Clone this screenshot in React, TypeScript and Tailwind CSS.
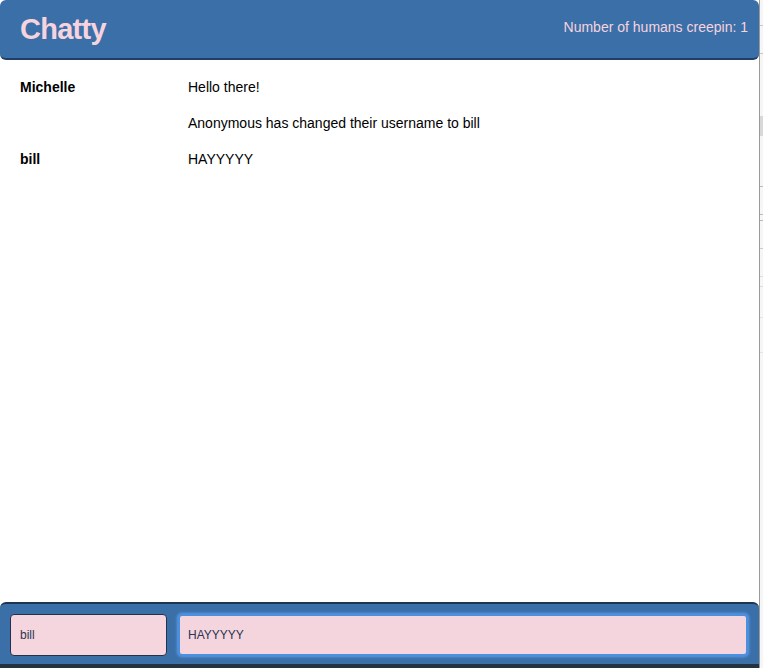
const messages = [
  { user: "Michelle", text: "Hello there!" },
  { user: "", text: "Anonymous has changed their username to bill" },
  { user: "bill", text: "HAYYYYY" },
];

export default function App() {
  return (
    <div
      className="flex h-[668px] w-[763px] bg-white"
      style={{ fontFamily: '"Liberation Sans", Arial, sans-serif' }}
    >
      <div className="flex w-[759px] flex-col">
        {/* Nav bar */}
        <nav className="flex h-[60px] items-center justify-between rounded-md border-b-2 border-[#1f3f66] bg-[#3a6fa8] pl-5 pr-[11px]">
          <h1 className="text-[29px] font-bold leading-none tracking-tight text-[#f7d3de]">Chatty</h1>
          <span className="pb-1 text-[14px] text-[#f7d3de]">Number of humans creepin: 1</span>
        </nav>

        {/* Message list */}
        <main className="flex flex-1 flex-col pt-[16px] text-[14px] text-black">
          {messages.map((m, i) => (
            <div key={i} className="flex h-[36px] items-start pt-[1px]">
              <span className="w-[188px] shrink-0 pl-5 font-bold">{m.user}</span>
              <span>{m.text}</span>
            </div>
          ))}
        </main>

        {/* Chat bar */}
        <footer className="flex h-[62px] items-center gap-[11px] rounded-t-md border-t-2 border-[#1f3554] bg-[#3a6fa8] pl-[10px] pr-[11px] pt-[2px]">
          <div className="flex h-[42px] w-[157px] items-center rounded border border-[#23324a] bg-[#f5d5de] pl-[9px] text-[12px] text-[#2b3550]">
            bill
          </div>
          <div className="flex h-[42px] flex-1 items-center rounded border-2 border-[#4b8fe0] bg-[#f4d4dd] pl-[8px] text-[12px] text-[#2b3550] shadow-[0_0_3px_1px_#5b9ce8]">
            HAYYYYY
          </div>
        </footer>
        <div className="h-[4px] bg-[#243140]" />
      </div>

      {/* edge of window behind */}
      <div className="flex w-[4px] flex-col border-l border-[#9a9a9a] bg-[#f6f6f6]">
        <div className="mt-[25px] h-px bg-[#c8c8c8]" />
        <div className="mt-[27px] h-px bg-[#c8c8c8]" />
        <div className="mt-[62px] h-[20px] bg-[#d8d8d8]" />
        <div className="mt-[50px] h-px bg-[#bbbbbb]" />
        <div className="mt-[27px] h-px bg-[#bbbbbb]" />
        <div className="mt-[5px] h-px bg-[#bbbbbb]" />
        <div className="mt-[27px] h-px bg-[#cccccc]" />
        <div className="mt-[27px] h-px bg-[#dddddd]" />
        <div className="mt-[9px] h-px bg-[#dddddd]" />
        <div className="mt-[30px] h-px bg-[#e4e4e4]" />
        <div className="mt-[34px] h-px bg-[#e4e4e4]" />
      </div>
    </div>
  );
}
